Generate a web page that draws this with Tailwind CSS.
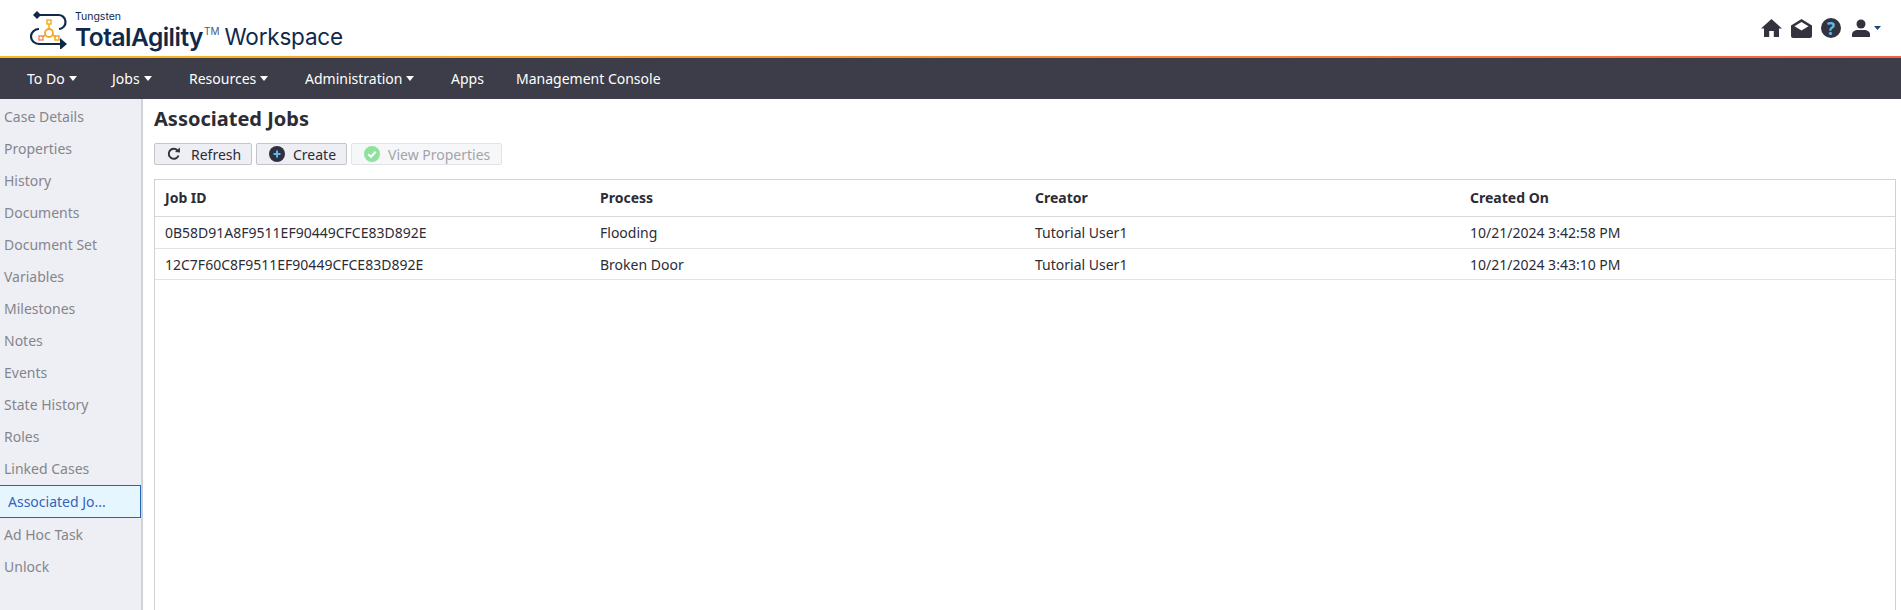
<!DOCTYPE html>
<html>
<head>
<meta charset="utf-8">
<script src="https://cdn.jsdelivr.net/npm/@tailwindcss/browser@4"></script>
</head>
<body class="h-[610px] overflow-hidden bg-white font-['Noto_Sans',sans-serif] text-[14px] text-[#2c2c36]">
<header class="flex h-[56px] items-center justify-between bg-white pl-[30px] pr-[20px]">
  <div class="flex items-center">
    <svg width="38" height="40" viewBox="0 0 38 40" class="mr-[7px] mt-[2px]" fill="none">
      <path d="M3 6 L7 2 L11 6 L7 10 Z" fill="#10294a"/>
      <path d="M9 6 H28 A7 7 0 0 1 29 20" stroke="#10294a" stroke-width="2.2"/>
      <path d="M9 20 A8 7.500 0 0 0 9 35 H31" stroke="#10294a" stroke-width="2.2"/>
      <path d="M30 29 L37 35 L30 41 Z" fill="#10294a"/>
      <circle cx="19" cy="24" r="4" stroke="#f6a623" stroke-width="1.800"/>
      <path d="M19 20 V15 M15.500 26 L12 28 M22.500 26 L26 28" stroke="#f6a623" stroke-width="1.500"/>
      <rect x="17" y="11" width="4" height="4" stroke="#f6b023" stroke-width="1.500"/>
      <rect x="9" y="27" width="4" height="4" stroke="#f58a72" stroke-width="1.500"/>
      <rect x="25" y="27" width="4" height="4" stroke="#f6a623" stroke-width="1.500"/>
    </svg>
    <div class="mt-[6px] flex flex-col font-['Inter',sans-serif] text-[#10294a]">
      <span class="mb-[-1px] text-[10.500px] leading-[12px]">Tungsten</span>
      <div class="flex items-start leading-[30px]">
        <span class="text-[24.500px] font-semibold tracking-[-0.5px]">TotalAgility</span>
        <span class="mt-[-1px] ml-[1px] text-[10px] leading-[20px] text-[#4a5a73]">TM</span>
        <span class="ml-[5px] text-[22.500px] tracking-[-0.2px]">Workspace</span>
      </div>
    </div>
  </div>
  <div class="flex items-center text-[#33333f]">
    <svg width="21" height="20" viewBox="0 0 21 20" fill="currentColor" class="mr-[9px]"><path d="M10.500 1 L21 10.500 H18 V19 H12.800 V13 H8.200 V19 H3 V10.500 H0 Z"/></svg>
    <svg width="21" height="19" viewBox="0 0 21 19" fill="currentColor" class="mr-[9px]"><path fill-rule="evenodd" d="M10.500 0 L21 6.500 V17 A2 2 0 0 1 19 19 H2 A2 2 0 0 1 0 17 V6.500 Z M10.500 3 L3.500 7.300 L10.500 11.500 L17.500 7.300 Z"/></svg>
    <div class="mr-[11px] flex h-[20px] w-[20px] items-center justify-center rounded-full bg-[#33333f] text-[17px] font-bold leading-none text-[#5cb8ee]">?</div>
    <svg width="18" height="18" viewBox="0 0 18 18" fill="currentColor" class="mr-[4px]"><circle cx="9" cy="5" r="4.500"/><path d="M0 18 V15.500 C0 12.500 3 11 5.500 11 H12.500 C15 11 18 12.500 18 15.500 V18 Z"/></svg>
    <svg width="7" height="4" viewBox="0 0 7 4"><path d="M0 0 H7 L3.500 4 Z" fill="#23476e"/></svg>
  </div>
</header>
<div class="h-[2px] bg-gradient-to-r from-[#f8b820] to-[#f4603c]"></div>
<nav class="flex h-[41px] items-center bg-[#3c3d48] pl-[27px] text-[14px] text-white">
  <span class="flex w-[85px] items-center gap-[4px]">To Do <i class="h-0 w-0 border-x-[4.500px] border-t-[5px] border-x-transparent border-t-white"></i></span>
  <span class="flex w-[77px] items-center gap-[4px]">Jobs <i class="h-0 w-0 border-x-[4.500px] border-t-[5px] border-x-transparent border-t-white"></i></span>
  <span class="flex w-[116px] items-center gap-[4px]">Resources <i class="h-0 w-0 border-x-[4.500px] border-t-[5px] border-x-transparent border-t-white"></i></span>
  <span class="flex w-[146px] items-center gap-[4px]">Administration <i class="h-0 w-0 border-x-[4.500px] border-t-[5px] border-x-transparent border-t-white"></i></span>
  <span class="w-[65px]">Apps</span>
  <span>Management Console</span>
</nav>
<div class="flex h-[511px]">
  <aside class="w-[143px] shrink-0 border-r-2 border-[#d2d2d6] bg-[#eeeff4] pt-[1px] text-[#85858c]">
    <div class="flex h-[32px] items-center pl-[4px]">Case Details</div>
    <div class="flex h-[32px] items-center pl-[4px]">Properties</div>
    <div class="flex h-[32px] items-center pl-[4px]">History</div>
    <div class="flex h-[32px] items-center pl-[4px]">Documents</div>
    <div class="flex h-[32px] items-center pl-[4px]">Document Set</div>
    <div class="flex h-[32px] items-center pl-[4px]">Variables</div>
    <div class="flex h-[32px] items-center pl-[4px]">Milestones</div>
    <div class="flex h-[32px] items-center pl-[4px]">Notes</div>
    <div class="flex h-[32px] items-center pl-[4px]">Events</div>
    <div class="flex h-[32px] items-center pl-[4px]">State History</div>
    <div class="flex h-[32px] items-center pl-[4px]">Roles</div>
    <div class="flex h-[32px] items-center pl-[4px]">Linked Cases</div>
    <div class="mt-[1px] flex h-[33px] items-center border border-l-0 border-[#1f68b5] bg-[#e6f6ff] pl-[8px] text-[#3762b8]">Associated Jo...</div>
    <div class="flex h-[32px] items-center pl-[4px]">Ad Hoc Task</div>
    <div class="flex h-[32px] items-center pl-[4px]">Unlock</div>
  </aside>
  <main class="flex min-w-0 flex-1 flex-col pl-[11px] pr-[5px]">
    <h1 class="mt-[4px] text-[20px] font-bold leading-[32px] text-[#2c2c36]">Associated Jobs</h1>
    <div class="mt-[8px] flex gap-[4px] text-[14px]">
      <button class="flex h-[22px] w-[98px] items-center rounded-[2px] border border-[#c4c5cb] bg-[#eeeff4] pl-[12px]">
        <svg width="14" height="14" viewBox="0 0 14 14" fill="none" class="mr-[10px]"><path d="M11.500 8.500 A5 5 0 1 1 10.500 3.500" stroke="#33333f" stroke-width="2"/><path d="M8 5 L13 5.500 L12.800 0.500 Z" fill="#33333f"/></svg>
        Refresh
      </button>
      <button class="flex h-[22px] w-[91px] items-center rounded-[2px] border border-[#c4c5cb] bg-[#eeeff4] pl-[12px]">
        <svg width="16" height="16" viewBox="0 0 16 16" class="mr-[8px]"><circle cx="8" cy="8" r="8" fill="#2f3140"/><path d="M4.500 8 H11.500 M8 4.500 V11.500" stroke="#5cb8ee" stroke-width="2"/></svg>
        Create
      </button>
      <button class="flex h-[22px] w-[151px] items-center rounded-[2px] border border-[#e2e3e7] bg-[#f6f7f9] pl-[12px] text-[#a3a4aa]">
        <svg width="16" height="16" viewBox="0 0 16 16" fill="none" class="mr-[8px]"><circle cx="8" cy="8" r="8" fill="#8ee29c"/><path d="M4.300 8.200 L7 10.800 L11.700 5.800" stroke="#fff" stroke-width="2"/></svg>
        View Properties
      </button>
    </div>
    <div class="mt-[14px] flex-1 border border-b-0 border-[#d2d2d6]">
      <div class="grid h-[37px] grid-cols-[435px_435px_435px_1fr] items-center border-b border-[#d9d9dd] pb-[2px] pl-[10px] font-bold">
        <span>Job ID</span><span>Process</span><span>Creator</span><span>Created On</span>
      </div>
      <div class="grid h-[32px] grid-cols-[435px_435px_435px_1fr] items-center border-b border-[#e2e2e6] pl-[10px]">
        <span>0B58D91A8F9511EF90449CFCE83D892E</span><span>Flooding</span><span>Tutorial User1</span><span>10/21/2024 3:42:58 PM</span>
      </div>
      <div class="grid h-[31px] grid-cols-[435px_435px_435px_1fr] items-center border-b border-[#e2e2e6] pl-[10px]">
        <span>12C7F60C8F9511EF90449CFCE83D892E</span><span>Broken Door</span><span>Tutorial User1</span><span>10/21/2024 3:43:10 PM</span>
      </div>
    </div>
  </main>
</div>
</body>
</html>
